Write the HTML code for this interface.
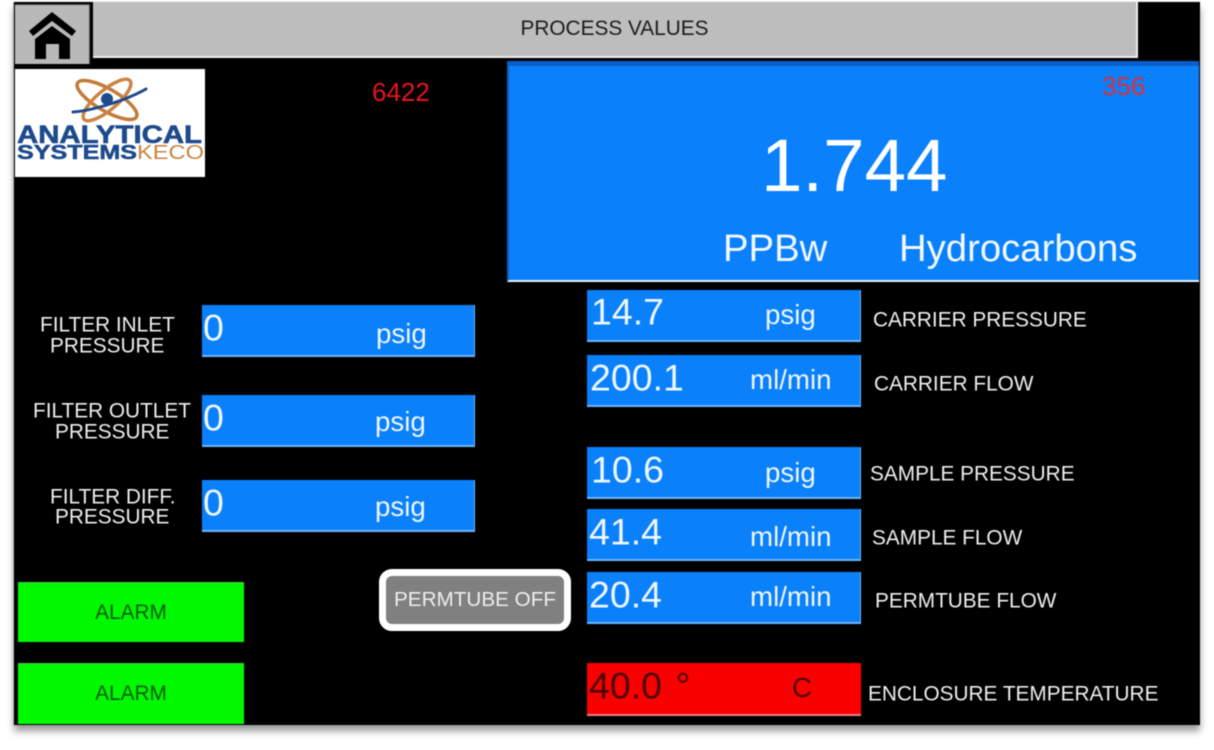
<!DOCTYPE html>
<html><head><meta charset="utf-8"><style>
html,body{margin:0;padding:0;background:#fff;width:1214px;height:750px;overflow:hidden}
body{position:relative;font-family:"Liberation Sans",sans-serif}
#w{position:absolute;left:0;top:0;width:1214px;height:750px;filter:blur(.45px)}
.a{position:absolute;white-space:nowrap}
#s{position:absolute;left:14px;top:2px;width:1186px;height:723px;background:#000;box-shadow:0 6px 7px #9a9a9a,-1px 0 1px #bbb}
.b{position:absolute;background:#0a80fb;border-bottom:2px solid #6db4fb;border-right:1px solid #6db4fb;box-sizing:border-box}
.t{position:absolute;white-space:nowrap;color:#eef6ff;line-height:1;transform:translateY(-50%)}
.v{font-size:37.5px}.u{font-size:27.7px}
.l{font-size:20.8px;color:#eee;text-align:center}
.g{position:absolute;left:18px;width:226px;background:#00f900;border-top:1px solid #55c055;box-sizing:border-box;color:#0a5a0a;font-size:20.8px;text-align:center}
</style></head><body><div id="w">
<div id="s"></div>

<div class="a" style="left:93px;top:2px;width:1045px;height:56px;background:#bdbdbd;border-right:2px solid #eee;border-bottom:2px solid #eee;box-sizing:border-box;text-align:center;color:#1c1c1c;font-size:20.8px;line-height:54px">PROCESS VALUES</div>
<div class="a" style="left:15px;top:4px;width:75px;height:60px;background:#b9b9b9;border-right:1px solid #555;border-top:1px solid #444;box-sizing:border-box"></div>
<svg class="a" style="left:15px;top:4px" width="76" height="62" viewBox="15 4 76 62">
<path d="M29 31 L52 12 L76 31 L72 36 L52 21 L33 36 Z" fill="#000"/>
<path d="M35 39 L52 26 L70 39 V59 H59 V44 H46 V59 H35 Z" fill="#000"/>
</svg>

<div class="a" style="left:15px;top:69px;width:190px;height:108px;background:#fff"></div>
<svg class="a" style="left:15px;top:69px" width="190" height="108" viewBox="0 0 190 108">
<g fill="none" stroke-linecap="round">
<ellipse cx="92" cy="31" rx="34" ry="11" transform="rotate(30 92 31)" stroke="#c47a3a" stroke-width="3.5"/>
<ellipse cx="92" cy="31" rx="30" ry="10" transform="rotate(-40 92 31)" stroke="#c98544" stroke-width="3.5"/>
<path d="M58 43 C75 42 110 32 131 20" stroke="#1d4a8c" stroke-width="3"/>
</g>
<circle cx="92" cy="30" r="6" fill="#1d4a8c"/>
<text x="2" y="74" font-family="Liberation Sans,sans-serif" font-weight="700" font-size="25" fill="#1d4a8c" stroke="#1d4a8c" stroke-width=".6" textLength="185" lengthAdjust="spacingAndGlyphs">ANALYTICAL</text>
<text x="2" y="90" font-family="Liberation Sans,sans-serif" font-weight="700" font-size="20" fill="#1d4a8c" stroke="#1d4a8c" stroke-width=".5" textLength="120" lengthAdjust="spacingAndGlyphs">SYSTEMS</text>
<text x="122" y="90" font-family="Liberation Sans,sans-serif" font-size="20" fill="#c9843f" textLength="67" lengthAdjust="spacingAndGlyphs">KECO</text>
</svg>

<div class="t" style="left:372px;top:92px;color:#e8141c;font-size:26px">6422</div>

<div class="a" style="left:507px;top:61px;width:692px;height:221px;background:#0a80fb;border-top:5px solid #0860c8;border-left:2px solid #0860c8;border-bottom:2px solid #e8f2ff;box-sizing:border-box"></div>
<div class="t" style="left:1102px;top:86px;color:#d8303c;font-size:26px">356</div>
<div class="t" style="left:761px;top:166px;color:#fff;font-size:74.5px">1.744</div>
<div class="t" style="left:723px;top:249px;color:#f2f8ff;font-size:38.3px">PPBw</div>
<div class="t" style="left:899px;top:249px;color:#f2f8ff;font-size:38.3px">Hydrocarbons</div>

<div class="t l" style="left:40px;top:326px">FILTER INLET</div>
<div class="t l" style="left:50px;top:347px">PRESSURE</div>
<div class="t l" style="left:33px;top:412px">FILTER OUTLET</div>
<div class="t l" style="left:55px;top:433px">PRESSURE</div>
<div class="t l" style="left:50px;top:498px">FILTER DIFF.</div>
<div class="t l" style="left:55px;top:518px">PRESSURE</div>

<div class="b" style="left:202px;top:305px;width:273px;height:52px"></div>
<div class="t v" style="left:203px;top:328px">0</div><div class="t u" style="left:376px;top:334px">psig</div>
<div class="b" style="left:202px;top:395px;width:273px;height:52px"></div>
<div class="t v" style="left:203px;top:418px">0</div><div class="t u" style="left:375px;top:422px">psig</div>
<div class="b" style="left:202px;top:480px;width:273px;height:52px"></div>
<div class="t v" style="left:203px;top:503px">0</div><div class="t u" style="left:375px;top:507px">psig</div>

<div class="g" style="top:582px;height:60px;line-height:60px">ALARM</div>
<div class="g" style="top:663px;height:61px;line-height:60px">ALARM</div>

<div class="a" style="left:379px;top:569px;width:192px;height:62px;background:#808080;border:7px solid #fff;border-radius:13px;box-sizing:border-box;color:#eee;font-size:20.7px;text-align:center;line-height:47px">PERMTUBE OFF</div>

<div class="b" style="left:587px;top:290px;width:274px;height:52px"></div>
<div class="t v" style="left:591px;top:312px">14.7</div><div class="t u" style="left:765px;top:315px">psig</div>
<div class="t l" style="left:873px;top:321px">CARRIER PRESSURE</div>

<div class="b" style="left:587px;top:355px;width:274px;height:52px"></div>
<div class="t v" style="left:590px;top:378px">200.1</div><div class="t u" style="left:750px;top:380px">ml/min</div>
<div class="t l" style="left:874px;top:385px">CARRIER FLOW</div>

<div class="b" style="left:587px;top:447px;width:274px;height:52px"></div>
<div class="t v" style="left:591px;top:470px">10.6</div><div class="t u" style="left:765px;top:473px">psig</div>
<div class="t l" style="left:870px;top:475px">SAMPLE PRESSURE</div>

<div class="b" style="left:587px;top:509px;width:274px;height:52px"></div>
<div class="t v" style="left:589px;top:532px">41.4</div><div class="t u" style="left:750px;top:537px">ml/min</div>
<div class="t l" style="left:872px;top:539px">SAMPLE FLOW</div>

<div class="b" style="left:587px;top:572px;width:274px;height:52px"></div>
<div class="t v" style="left:589px;top:595px">20.4</div><div class="t u" style="left:750px;top:597px">ml/min</div>
<div class="t l" style="left:875px;top:602px">PERMTUBE FLOW</div>

<div class="a" style="left:587px;top:663px;width:274px;height:53px;background:#fb0000;border-bottom:2px solid #f08080;box-sizing:border-box"></div>
<div class="t v" style="left:589px;top:686px;color:#4a0505;word-spacing:3px">40.0 °</div>
<div class="t u" style="left:792px;top:688px;color:#4a0505">C</div>
<div class="t l" style="left:868px;top:695px">ENCLOSURE TEMPERATURE</div>
</div></body></html>
